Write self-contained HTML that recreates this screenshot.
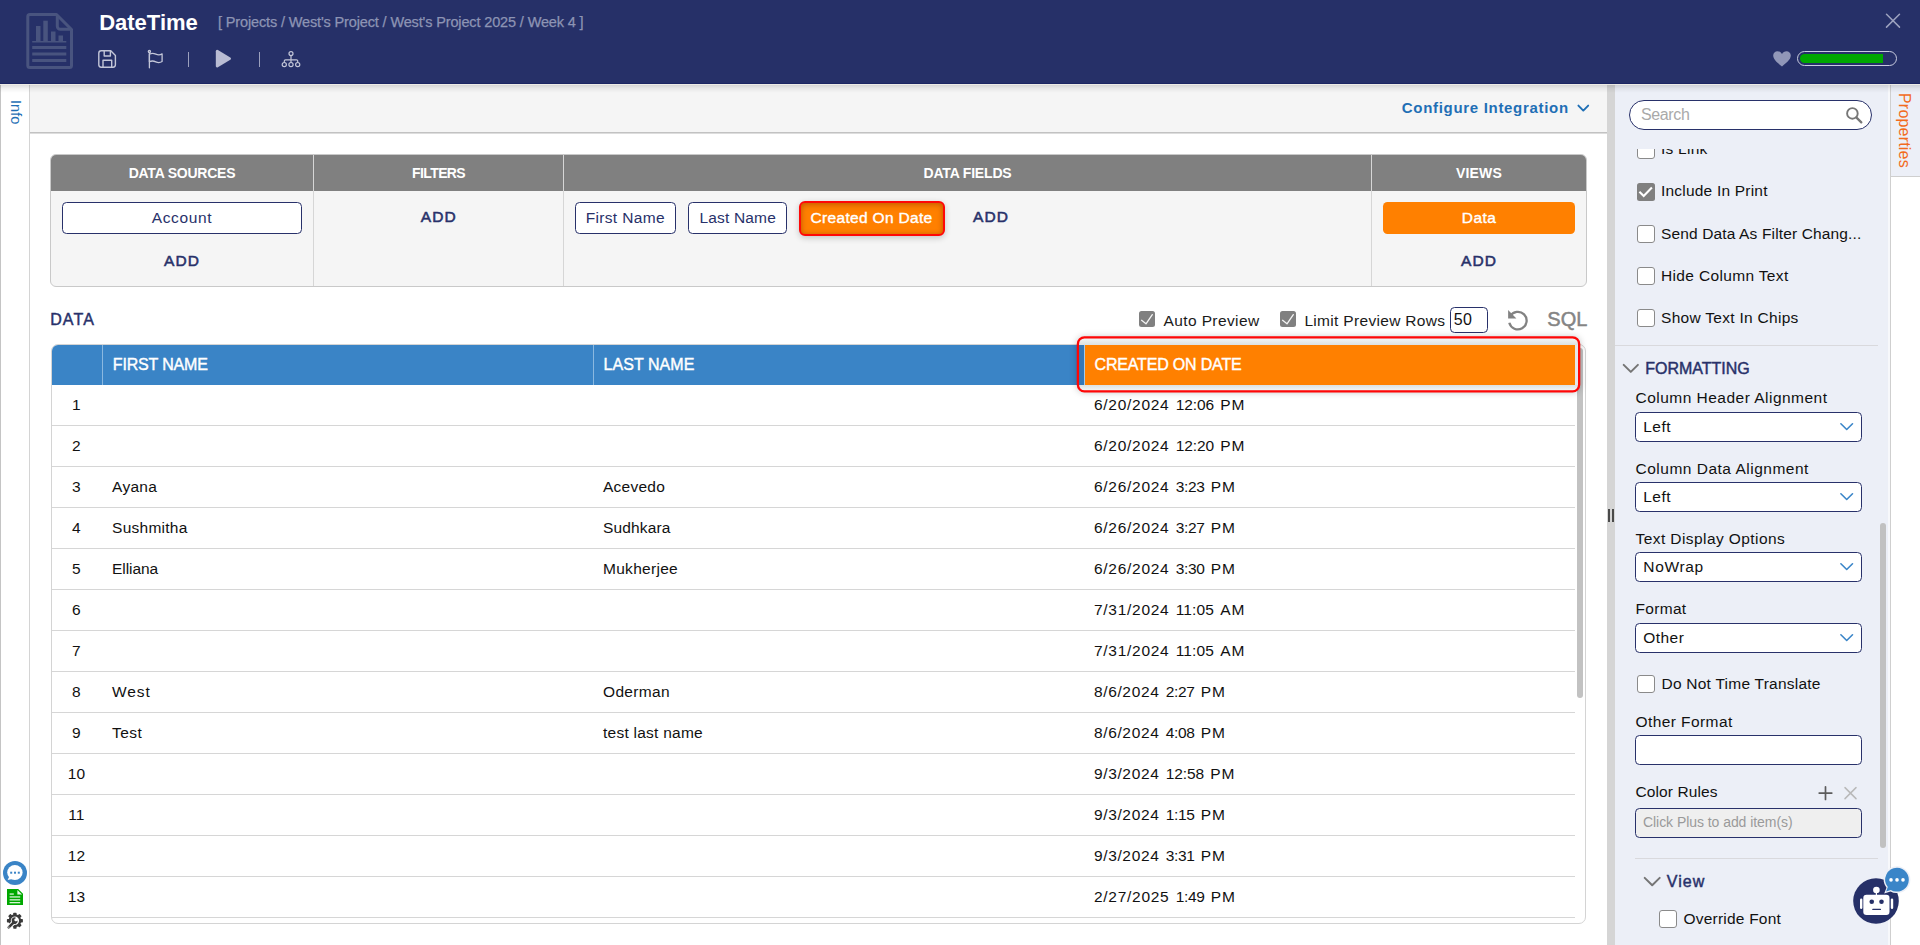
<!DOCTYPE html>
<html lang="en"><head><meta charset="utf-8"><title>DateTime</title>
<style>
html,body{margin:0;padding:0}
body{width:1920px;height:945px;overflow:hidden;background:#fff;position:relative;font-family:"Liberation Sans",sans-serif}
div,span.t,svg{position:absolute;box-sizing:border-box}
span.t{white-space:pre}
svg{overflow:visible}
</style></head>
<body>
<div style="left:30px;top:84px;width:1577px;height:861px;background:#fff"></div>
<div style="left:30px;top:84px;width:1577px;height:48px;background:#f5f5f5"></div>
<div style="left:30px;top:132px;width:1577px;height:1px;background:#c2c2c2"></div>
<div style="left:30px;top:133px;width:1577px;height:1px;background:#dddddd"></div>
<div style="left:0px;top:84px;width:30px;height:861px;background:#fff;border-left:1px solid #c4c4c4;border-right:1px solid #d4d4d4"></div>
<div style="left:1607px;top:84px;width:8px;height:861px;background:#d5d5d5"></div>
<div style="left:1615px;top:84px;width:273px;height:861px;background:#eceff7"></div>
<div style="left:1888px;top:84px;width:32px;height:861px;background:#fff"></div>
<div style="left:1888px;top:84px;width:32px;height:93px;background:#eceff7;border-bottom:1px solid #cfcfcf"></div>
<div style="left:1888px;top:84px;width:2px;height:861px;background:#f7f8fb"></div>
<div style="left:1890px;top:84px;width:1px;height:861px;background:#cfcfcf"></div>
<div style="left:0px;top:0px;width:1920px;height:84px;background:#263068;border-bottom:1px solid #1c2663;z-index:5"></div>
<div style="left:0px;top:84px;width:1920px;height:1px;background:rgba(236,234,228,.9);z-index:5"></div>
<div style="left:0px;top:85px;width:1920px;height:8px;background:linear-gradient(rgba(0,0,0,.13),rgba(0,0,0,.05) 45%,rgba(0,0,0,0));z-index:5"></div>
<div style="left:0;top:0;width:1920px;height:84px;z-index:6">
<svg style="left:24px;top:11px" width="52" height="60" viewBox="24 11 52 60" fill="none" stroke="#49547f">
<path d="M29.8 14.5h26.7l15 15v36a2 2 0 0 1-2 2h-39.7a2 2 0 0 1-2-2v-49a2 2 0 0 1 2-2z" stroke-width="3" stroke-linejoin="round"/>
<path d="M57.3 15.5v10.7a3 3 0 0 0 3 3h10.5" stroke-width="3" stroke-linejoin="round"/>
<g stroke="none" fill="#49547f"><rect x="36" y="26" width="4.5" height="15.5"/><rect x="43.3" y="20.7" width="4.5" height="20.8"/><rect x="51" y="31.5" width="4.5" height="10"/><rect x="58.5" y="35.5" width="4.5" height="6"/>
<rect x="32.2" y="41" width="34.1" height="1.5"/><rect x="32.2" y="46" width="34.1" height="3"/><rect x="32.2" y="52.5" width="34.1" height="3"/><rect x="32.2" y="59" width="34.1" height="3"/></g></svg>
<span class="t" style="left:99.20px;top:11.90px;font-size:22px;line-height:22px;color:#fff;font-weight:700;letter-spacing:-0.005px;">DateTime</span>
<span class="t" style="left:218.00px;top:14.75px;font-size:14.5px;line-height:14.5px;color:#8d94b4;letter-spacing:-0.139px;-webkit-text-stroke:0.25px #8d94b4;">[ Projects / West's Project / West's Project 2025 / Week 4 ]</span>
<svg style="left:97px;top:49px" width="20" height="20" viewBox="97 49 20 20" fill="none" stroke="#c3c6d8" stroke-width="1.4" stroke-linejoin="round">
<path d="M101.2 50.8h9.6l4.6 4.6v9.4a2.4 2.4 0 0 1-2.4 2.4h-11.8a2.4 2.4 0 0 1-2.4-2.4v-11.6a2.4 2.4 0 0 1 2.4-2.4z"/>
<path d="M104.2 50.8v5.2h6.2v-5.2"/><path d="M103 67.2v-7h8.7v7"/></svg>
<svg style="left:146px;top:49px" width="20" height="20" viewBox="146 49 20 20" fill="none" stroke="#c3c6d8" stroke-width="1.3" stroke-linejoin="round" stroke-linecap="round">
<path d="M149.4 52.6V67.8"/><circle cx="149.4" cy="51.6" r="1.1"/>
<path d="M149.4 54.2c2.5-1.4 4.3-1 6.4 0s4 1.2 6.3-.3v7.6c-2.3 1.5-4.2 1.3-6.3.3s-3.9-1.4-6.4 0z"/></svg>
<div style="left:188px;top:52px;width:1.2px;height:15px;background:#9ba0bd"></div>
<svg style="left:214px;top:48px" width="20" height="22" viewBox="214 48 20 22"><path d="M215.8 51.2a1.4 1.4 0 0 1 2.1-1.2l12.4 7.4a1.4 1.4 0 0 1 0 2.4l-12.4 7.4a1.4 1.4 0 0 1-2.1-1.2z" fill="#b9bcd3"/></svg>
<div style="left:259px;top:52px;width:1.2px;height:15px;background:#9ba0bd"></div>
<svg style="left:281px;top:50px" width="20" height="19" viewBox="281 50 20 19" fill="none" stroke="#c3c6d8" stroke-width="1.2">
<circle cx="291" cy="53.6" r="2"/><circle cx="284.3" cy="64.6" r="2.1"/><circle cx="291" cy="64.6" r="2.1"/><circle cx="297.7" cy="64.6" r="2.1"/>
<path d="M291 55.6v6.9M284.3 62.5v-1.5a1.2 1.2 0 0 1 1.2-1.2h11a1.2 1.2 0 0 1 1.2 1.2v1.5"/></svg>
<svg style="left:1884px;top:12px" width="18" height="18" viewBox="1884 12 18 18" stroke="#9da2bf" stroke-width="1.5" stroke-linecap="round"><path d="M1886.5 14.3l13 12.8M1899.5 14.3l-13 12.8"/></svg>
<svg style="left:1772px;top:50px" width="20" height="18" viewBox="0 0 20 18"><path d="M10 16.4C6.5 13.6 1.2 10 1.2 5.6 1.2 2.9 3.2 1.2 5.5 1.2c1.9 0 3.5 1 4.5 2.8 1-1.8 2.6-2.8 4.5-2.8 2.3 0 4.300 1.700 4.300 4.400 0 4.400-5.300 8-8.800 10.800z" fill="#9197b8"/></svg>
<div style="left:1796.5px;top:51px;width:100.5px;height:15px;border:1.4px solid #c9cce0;border-radius:8px"></div>
<div style="left:1800px;top:54px;width:83px;height:9px;background:#00a800;border-radius:4.5px 0 0 4.5px"></div>
</div>
<span class="t" style="left:1401.80px;top:99.80px;font-size:15px;line-height:15px;color:#1f6fb5;font-weight:700;letter-spacing:0.690px;">Configure Integration</span>
<svg style="left:1576px;top:103px" width="14" height="10" viewBox="1576 103 14 10" fill="none" stroke="#1f6fb5" stroke-width="1.9" stroke-linecap="round" stroke-linejoin="round"><path d="M1578.4 105.6l4.9 5 4.9-5"/></svg>
<div style="left:16px;top:100px;width:0;height:0"><span class="t" style="left:0;top:-7px;font-size:14.500px;line-height:14px;color:#1f6fb5;transform-origin:0 50%;transform:rotate(90deg);letter-spacing:.05px">Info</span></div>
<svg style="left:2px;top:860px" width="26" height="26" viewBox="2 860 26 26"><circle cx="15" cy="872.900" r="12" fill="#3a84c6"/>
<ellipse cx="14.900" cy="872.500" rx="7.700" ry="7.600" fill="#fff"/><path d="M9.300 876.500l-1.700 3.600 4.700-1.100z" fill="#fff"/>
<g fill="#3a84c6"><rect x="10.200" y="871.700" width="2" height="2"/><rect x="14" y="871.700" width="2" height="2"/><rect x="17.800" y="871.700" width="2" height="2"/></g></svg>
<svg style="left:7px;top:889px" width="16" height="16" viewBox="0 0 16 16"><path d="M0 0h11.200l4.800 4.800v11.200h-16z" fill="#00a800"/><path d="M10.400 .9v4.600h4.600z" fill="#e9f7e9"/>
<g fill="#d9f3d9"><rect x="2.600" y="4.400" width="4.200" height="1.300"/><rect x="2.600" y="7.300" width="10.600" height="1.300"/><rect x="2.600" y="10.200" width="10.600" height="1.300"/><rect x="2.600" y="13" width="10.600" height="1.300"/></g></svg>
<svg style="left:7px;top:913px" width="16" height="16" viewBox="0 0 16 16"><g transform="translate(7.900 7.700)"><g fill="#3a3a3a"><rect x="-1.700" y="-8" width="3.400" height="3" rx=".7" transform="rotate(0)"/><rect x="-1.700" y="-8" width="3.400" height="3" rx=".7" transform="rotate(45)"/><rect x="-1.700" y="-8" width="3.400" height="3" rx=".7" transform="rotate(90)"/><rect x="-1.700" y="-8" width="3.400" height="3" rx=".7" transform="rotate(135)"/><rect x="-1.700" y="-8" width="3.400" height="3" rx=".7" transform="rotate(180)"/><rect x="-1.700" y="-8" width="3.400" height="3" rx=".7" transform="rotate(270)"/><rect x="-1.700" y="-8" width="3.400" height="3" rx=".7" transform="rotate(315)"/></g>
<circle r="5.250" fill="none" stroke="#3a3a3a" stroke-width="2.200" /></g>
<path d="M.5 15.500l7-6.900" stroke="#fff" stroke-width="4.600" stroke-linecap="butt"/><path d="M1.700 14.300l5.400-5.300" stroke="#3a3a3a" stroke-width="2.500" stroke-linecap="round"/>
<path d="M6 10.400a2.900 2.900 0 0 0 4.600-2.900l-1.700 1.100-1.500-.9 0-1.800 1.700-1a2.900 2.900 0 0 0-4.300 3.500z" fill="#3a3a3a"/><circle cx="1.900" cy="14.100" r=".65" fill="#fff"/></svg>
<div style="left:50px;top:154px;width:1537px;height:133px;background:#f5f5f5;border:1px solid #c9c9c9;border-radius:6px;overflow:hidden"><div style="left:0;top:0;width:1537px;height:36px;background:#808080"></div><div style="left:262px;top:0;width:1px;height:132px;background:#d6d6d6"></div><div style="left:512px;top:0;width:1px;height:132px;background:#d6d6d6"></div><div style="left:1320px;top:0;width:1px;height:132px;background:#d6d6d6"></div></div>
<span class="t" style="left:128.65px;top:166.00px;font-size:14px;line-height:14px;color:#fff;font-weight:700;letter-spacing:-0.227px;">DATA SOURCES</span>
<span class="t" style="left:412.10px;top:166.00px;font-size:14px;line-height:14px;color:#fff;font-weight:700;letter-spacing:-0.614px;">FILTERS</span>
<span class="t" style="left:923.50px;top:166.00px;font-size:14px;line-height:14px;color:#fff;font-weight:700;letter-spacing:-0.179px;">DATA FIELDS</span>
<span class="t" style="left:1456.00px;top:166.00px;font-size:14px;line-height:14px;color:#fff;font-weight:700;letter-spacing:0.175px;">VIEWS</span>
<div style="left:62px;top:202px;width:240px;height:32px;background:#fff;border:1.300px solid #28316a;border-radius:4.500px"></div>
<span class="t" style="left:151.70px;top:209.75px;font-size:15.5px;line-height:15.5px;color:#28316a;letter-spacing:0.655px;">Account</span>
<span class="t" style="left:164.10px;top:252.75px;font-size:15.5px;line-height:15.5px;color:#28316a;letter-spacing:1.089px;-webkit-text-stroke:0.55px #28316a;">ADD</span>
<span class="t" style="left:420.80px;top:208.75px;font-size:15.5px;line-height:15.5px;color:#28316a;letter-spacing:1.089px;-webkit-text-stroke:0.55px #28316a;">ADD</span>
<div style="left:575px;top:202px;width:101px;height:32px;background:#fff;border:1.300px solid #28316a;border-radius:4.500px"></div>
<span class="t" style="left:585.70px;top:209.75px;font-size:15.5px;line-height:15.5px;color:#28316a;letter-spacing:0.340px;">First Name</span>
<div style="left:688px;top:202px;width:99px;height:32px;background:#fff;border:1.300px solid #28316a;border-radius:4.500px"></div>
<span class="t" style="left:699.40px;top:209.75px;font-size:15.5px;line-height:15.5px;color:#28316a;letter-spacing:0.183px;">Last Name</span>
<div style="left:799px;top:201px;width:146px;height:34.5px;background:#ff8000;border:2.200px solid #ff0808;border-radius:6px;box-shadow:0 2px 6px rgba(0,0,0,.2),inset 0 2px 6px rgba(140,60,0,.38),inset 0 0 4px rgba(140,60,0,.3)"></div>
<span class="t" style="left:810.50px;top:209.75px;font-size:15.5px;line-height:15.5px;color:#fff;letter-spacing:0.321px;-webkit-text-stroke:0.4px #fff;">Created On Date</span>
<span class="t" style="left:973.00px;top:208.75px;font-size:15.5px;line-height:15.5px;color:#28316a;letter-spacing:1.089px;-webkit-text-stroke:0.55px #28316a;">ADD</span>
<div style="left:1383px;top:202px;width:192px;height:32px;background:#ff8000;border-radius:4.500px"></div>
<span class="t" style="left:1461.80px;top:209.75px;font-size:15.5px;line-height:15.5px;color:#fff;letter-spacing:0.463px;-webkit-text-stroke:0.4px #fff;">Data</span>
<span class="t" style="left:1461.00px;top:252.75px;font-size:15.5px;line-height:15.5px;color:#28316a;letter-spacing:1.089px;-webkit-text-stroke:0.55px #28316a;">ADD</span>
<span class="t" style="left:50.20px;top:311.90px;font-size:16px;line-height:16px;color:#28316a;letter-spacing:1.126px;-webkit-text-stroke:0.45px #28316a;">DATA</span>
<div style="left:1139px;top:311px;width:16px;height:16px;background:#808080;border-radius:2.500px"></div>
<svg style="left:1139px;top:311px" width="16" height="16" viewBox="0 0 16 16" fill="none" stroke="#f4f4f4" stroke-width="1.300" stroke-linecap="round" stroke-linejoin="round"><path d="M2.600 9.300l4.400 3.500 6.300-9.200"/></svg>
<span class="t" style="left:1163.50px;top:312.75px;font-size:15.5px;line-height:15.5px;color:#1a1a1a;letter-spacing:0.389px;">Auto Preview</span>
<div style="left:1280px;top:311px;width:16px;height:16px;background:#808080;border-radius:2.500px"></div>
<svg style="left:1280px;top:311px" width="16" height="16" viewBox="0 0 16 16" fill="none" stroke="#f4f4f4" stroke-width="1.300" stroke-linecap="round" stroke-linejoin="round"><path d="M2.600 9.300l4.400 3.500 6.300-9.200"/></svg>
<span class="t" style="left:1304.40px;top:312.75px;font-size:15.5px;line-height:15.5px;color:#1a1a1a;letter-spacing:0.320px;">Limit Preview Rows</span>
<div style="left:1450px;top:307px;width:38px;height:26px;background:#fff;border:1.300px solid #28316a;border-radius:4.500px"></div>
<span class="t" style="left:1453.80px;top:311.70px;font-size:16px;line-height:16px;color:#111;letter-spacing:0.402px;">50</span>
<svg style="left:1506px;top:308px" width="24" height="24" viewBox="1506 308 24 24" fill="none" stroke="#828282" stroke-width="2.300"><path d="M1510.200 316.200a8.800 8.800 0 1 1 -.9 6.600" stroke-linecap="butt"/><path d="M1508.100 310.100v8.500h8.300z" fill="#828282" stroke="none"/></svg>
<span class="t" style="left:1547.30px;top:309.00px;font-size:20px;line-height:20px;color:#858585;letter-spacing:0.090px;-webkit-text-stroke:0.5px #858585;">SQL</span>
<div style="left:51px;top:344px;width:1534.5px;height:579.5px;border:1.300px solid #d4d4d4;border-radius:7px;background:#fff"></div>
<div style="left:52px;top:345px;width:1033px;height:40px;background:#3a84c6;border-radius:6px 0 0 0"></div>
<div style="left:102px;top:345px;width:1px;height:40px;background:#8ab8e0"></div>
<div style="left:593px;top:345px;width:1px;height:40px;background:#8ab8e0"></div>
<span class="t" style="left:112.80px;top:356.50px;font-size:16px;line-height:16px;color:#fff;letter-spacing:-0.161px;-webkit-text-stroke:0.4px #fff;">FIRST NAME</span>
<span class="t" style="left:603.50px;top:356.50px;font-size:16px;line-height:16px;color:#fff;letter-spacing:0.066px;-webkit-text-stroke:0.4px #fff;">LAST NAME</span>
<div style="left:52px;top:425px;width:1523px;height:1px;background:#d6d6d6"></div>
<span class="t" style="left:72.09px;top:396.75px;font-size:15.5px;line-height:15.5px;color:#111;">1</span>
<span class="t" style="left:1093.90px;top:396.75px;font-size:15.5px;line-height:15.5px;color:#111;letter-spacing:0.737px;">6/20/2024</span>
<span class="t" style="left:1175.70px;top:396.75px;font-size:15.5px;line-height:15.5px;color:#111;letter-spacing:-0.099px;">12:06</span>
<span class="t" style="left:1220.30px;top:396.75px;font-size:15.5px;line-height:15.5px;color:#111;letter-spacing:0.875px;">PM</span>
<div style="left:52px;top:466px;width:1523px;height:1px;background:#d6d6d6"></div>
<span class="t" style="left:72.09px;top:437.75px;font-size:15.5px;line-height:15.5px;color:#111;">2</span>
<span class="t" style="left:1093.90px;top:437.75px;font-size:15.5px;line-height:15.5px;color:#111;letter-spacing:0.737px;">6/20/2024</span>
<span class="t" style="left:1175.70px;top:437.75px;font-size:15.5px;line-height:15.5px;color:#111;letter-spacing:-0.099px;">12:20</span>
<span class="t" style="left:1220.30px;top:437.75px;font-size:15.5px;line-height:15.5px;color:#111;letter-spacing:0.875px;">PM</span>
<div style="left:52px;top:507px;width:1523px;height:1px;background:#d6d6d6"></div>
<span class="t" style="left:72.09px;top:478.75px;font-size:15.5px;line-height:15.5px;color:#111;">3</span>
<span class="t" style="left:112.10px;top:478.75px;font-size:15.5px;line-height:15.5px;color:#111;letter-spacing:0.266px;">Ayana</span>
<span class="t" style="left:603.00px;top:478.75px;font-size:15.5px;line-height:15.5px;color:#111;letter-spacing:0.239px;">Acevedo</span>
<span class="t" style="left:1093.90px;top:478.75px;font-size:15.5px;line-height:15.5px;color:#111;letter-spacing:0.737px;">6/26/2024</span>
<span class="t" style="left:1175.70px;top:478.75px;font-size:15.5px;line-height:15.5px;color:#111;letter-spacing:-0.343px;">3:23</span>
<span class="t" style="left:1210.80px;top:478.75px;font-size:15.5px;line-height:15.5px;color:#111;letter-spacing:0.875px;">PM</span>
<div style="left:52px;top:548px;width:1523px;height:1px;background:#d6d6d6"></div>
<span class="t" style="left:72.09px;top:519.75px;font-size:15.5px;line-height:15.5px;color:#111;">4</span>
<span class="t" style="left:112.10px;top:519.75px;font-size:15.5px;line-height:15.5px;color:#111;letter-spacing:0.252px;">Sushmitha</span>
<span class="t" style="left:603.00px;top:519.75px;font-size:15.5px;line-height:15.5px;color:#111;letter-spacing:0.143px;">Sudhkara</span>
<span class="t" style="left:1093.90px;top:519.75px;font-size:15.5px;line-height:15.5px;color:#111;letter-spacing:0.737px;">6/26/2024</span>
<span class="t" style="left:1175.70px;top:519.75px;font-size:15.5px;line-height:15.5px;color:#111;letter-spacing:-0.343px;">3:27</span>
<span class="t" style="left:1210.80px;top:519.75px;font-size:15.5px;line-height:15.5px;color:#111;letter-spacing:0.875px;">PM</span>
<div style="left:52px;top:589px;width:1523px;height:1px;background:#d6d6d6"></div>
<span class="t" style="left:72.09px;top:560.75px;font-size:15.5px;line-height:15.5px;color:#111;">5</span>
<span class="t" style="left:112.10px;top:560.75px;font-size:15.5px;line-height:15.5px;color:#111;letter-spacing:-0.076px;">Elliana</span>
<span class="t" style="left:603.00px;top:560.75px;font-size:15.5px;line-height:15.5px;color:#111;letter-spacing:0.292px;">Mukherjee</span>
<span class="t" style="left:1093.90px;top:560.75px;font-size:15.5px;line-height:15.5px;color:#111;letter-spacing:0.737px;">6/26/2024</span>
<span class="t" style="left:1175.70px;top:560.75px;font-size:15.5px;line-height:15.5px;color:#111;letter-spacing:-0.343px;">3:30</span>
<span class="t" style="left:1210.80px;top:560.75px;font-size:15.5px;line-height:15.5px;color:#111;letter-spacing:0.875px;">PM</span>
<div style="left:52px;top:630px;width:1523px;height:1px;background:#d6d6d6"></div>
<span class="t" style="left:72.09px;top:601.75px;font-size:15.5px;line-height:15.5px;color:#111;">6</span>
<span class="t" style="left:1093.90px;top:601.75px;font-size:15.5px;line-height:15.5px;color:#111;letter-spacing:0.737px;">7/31/2024</span>
<span class="t" style="left:1175.70px;top:601.75px;font-size:15.5px;line-height:15.5px;color:#111;letter-spacing:0.132px;">11:05</span>
<span class="t" style="left:1220.30px;top:601.75px;font-size:15.5px;line-height:15.5px;color:#111;letter-spacing:0.875px;">AM</span>
<div style="left:52px;top:671px;width:1523px;height:1px;background:#d6d6d6"></div>
<span class="t" style="left:72.09px;top:642.75px;font-size:15.5px;line-height:15.5px;color:#111;">7</span>
<span class="t" style="left:1093.90px;top:642.75px;font-size:15.5px;line-height:15.5px;color:#111;letter-spacing:0.737px;">7/31/2024</span>
<span class="t" style="left:1175.70px;top:642.75px;font-size:15.5px;line-height:15.5px;color:#111;letter-spacing:0.132px;">11:05</span>
<span class="t" style="left:1220.30px;top:642.75px;font-size:15.5px;line-height:15.5px;color:#111;letter-spacing:0.875px;">AM</span>
<div style="left:52px;top:712px;width:1523px;height:1px;background:#d6d6d6"></div>
<span class="t" style="left:72.09px;top:683.75px;font-size:15.5px;line-height:15.5px;color:#111;">8</span>
<span class="t" style="left:112.10px;top:683.75px;font-size:15.5px;line-height:15.5px;color:#111;letter-spacing:0.867px;">West</span>
<span class="t" style="left:603.00px;top:683.75px;font-size:15.5px;line-height:15.5px;color:#111;letter-spacing:0.339px;">Oderman</span>
<span class="t" style="left:1093.90px;top:683.75px;font-size:15.5px;line-height:15.5px;color:#111;letter-spacing:0.657px;">8/6/2024</span>
<span class="t" style="left:1165.70px;top:683.75px;font-size:15.5px;line-height:15.5px;color:#111;letter-spacing:-0.343px;">2:27</span>
<span class="t" style="left:1200.80px;top:683.75px;font-size:15.5px;line-height:15.5px;color:#111;letter-spacing:0.875px;">PM</span>
<div style="left:52px;top:753px;width:1523px;height:1px;background:#d6d6d6"></div>
<span class="t" style="left:72.09px;top:724.75px;font-size:15.5px;line-height:15.5px;color:#111;">9</span>
<span class="t" style="left:112.10px;top:724.75px;font-size:15.5px;line-height:15.5px;color:#111;letter-spacing:0.441px;">Test</span>
<span class="t" style="left:603.00px;top:724.75px;font-size:15.5px;line-height:15.5px;color:#111;letter-spacing:0.250px;">test last name</span>
<span class="t" style="left:1093.90px;top:724.75px;font-size:15.5px;line-height:15.5px;color:#111;letter-spacing:0.657px;">8/6/2024</span>
<span class="t" style="left:1165.70px;top:724.75px;font-size:15.5px;line-height:15.5px;color:#111;letter-spacing:-0.343px;">4:08</span>
<span class="t" style="left:1200.80px;top:724.75px;font-size:15.5px;line-height:15.5px;color:#111;letter-spacing:0.875px;">PM</span>
<div style="left:52px;top:794px;width:1523px;height:1px;background:#d6d6d6"></div>
<span class="t" style="left:67.78px;top:765.75px;font-size:15.5px;line-height:15.5px;color:#111;">10</span>
<span class="t" style="left:1093.90px;top:765.75px;font-size:15.5px;line-height:15.5px;color:#111;letter-spacing:0.657px;">9/3/2024</span>
<span class="t" style="left:1165.70px;top:765.75px;font-size:15.5px;line-height:15.5px;color:#111;letter-spacing:-0.099px;">12:58</span>
<span class="t" style="left:1210.30px;top:765.75px;font-size:15.5px;line-height:15.5px;color:#111;letter-spacing:0.875px;">PM</span>
<div style="left:52px;top:835px;width:1523px;height:1px;background:#d6d6d6"></div>
<span class="t" style="left:68.35px;top:806.75px;font-size:15.5px;line-height:15.5px;color:#111;">11</span>
<span class="t" style="left:1093.90px;top:806.75px;font-size:15.5px;line-height:15.5px;color:#111;letter-spacing:0.657px;">9/3/2024</span>
<span class="t" style="left:1165.70px;top:806.75px;font-size:15.5px;line-height:15.5px;color:#111;letter-spacing:-0.343px;">1:15</span>
<span class="t" style="left:1200.80px;top:806.75px;font-size:15.5px;line-height:15.5px;color:#111;letter-spacing:0.875px;">PM</span>
<div style="left:52px;top:876px;width:1523px;height:1px;background:#d6d6d6"></div>
<span class="t" style="left:67.78px;top:847.75px;font-size:15.5px;line-height:15.5px;color:#111;">12</span>
<span class="t" style="left:1093.90px;top:847.75px;font-size:15.5px;line-height:15.5px;color:#111;letter-spacing:0.657px;">9/3/2024</span>
<span class="t" style="left:1165.70px;top:847.75px;font-size:15.5px;line-height:15.5px;color:#111;letter-spacing:-0.343px;">3:31</span>
<span class="t" style="left:1200.80px;top:847.75px;font-size:15.5px;line-height:15.5px;color:#111;letter-spacing:0.875px;">PM</span>
<div style="left:52px;top:917px;width:1523px;height:1px;background:#d6d6d6"></div>
<span class="t" style="left:67.78px;top:888.75px;font-size:15.5px;line-height:15.5px;color:#111;">13</span>
<span class="t" style="left:1093.90px;top:888.75px;font-size:15.5px;line-height:15.5px;color:#111;letter-spacing:0.737px;">2/27/2025</span>
<span class="t" style="left:1175.70px;top:888.75px;font-size:15.5px;line-height:15.5px;color:#111;letter-spacing:-0.343px;">1:49</span>
<span class="t" style="left:1210.80px;top:888.75px;font-size:15.5px;line-height:15.5px;color:#111;letter-spacing:0.875px;">PM</span>
<div style="left:1577px;top:348px;width:6px;height:350px;background:#c2c2c2;border-radius:3px"></div>
<div style="left:1078px;top:338px;width:501px;height:53px;border-radius:6px;background:#e9eded;box-shadow:0 0 7px 1px rgba(0,0,0,.25)"></div>
<div style="left:1079px;top:339px;width:499px;height:6px;background:linear-gradient(#f0f3f3,#dde1e1)"></div>
<div style="left:1079px;top:385px;width:499px;height:5px;background:linear-gradient(#dde1e1,#f0f3f3)"></div>
<div style="left:1079px;top:345px;width:5px;height:40px;background:#3577b6"></div>
<div style="left:1084px;top:345px;width:1px;height:40px;background:#a5c9e8"></div>
<div style="left:1085px;top:345px;width:490px;height:40px;background:#ff8000"></div>
<div style="left:1575px;top:345px;width:3px;height:40px;background:#e4e8e8"></div>
<svg style="left:1070px;top:330px" width="520" height="70" viewBox="1070 330 520 70" fill="none"><rect x="1077.900" y="337.400" width="501.250" height="53.950" rx="6.500" stroke="#ff0606" stroke-width="2.300"/></svg>
<span class="t" style="left:1094.50px;top:356.50px;font-size:16px;line-height:16px;color:#fff;letter-spacing:-0.176px;-webkit-text-stroke:0.4px #fff;">CREATED ON DATE</span>
<div style="left:1629px;top:100px;width:243px;height:30px;background:#fff;border:1.400px solid #28316a;border-radius:15px"></div>
<span class="t" style="left:1641.00px;top:107.00px;font-size:16px;line-height:16px;color:#a9a9a9;letter-spacing:-0.384px;">Search</span>
<svg style="left:1845px;top:106px" width="18" height="18" viewBox="1845 106 18 18" fill="none" stroke="#777" stroke-width="1.900" stroke-linecap="round"><circle cx="1852.400" cy="113.400" r="5.300"/><path d="M1856.500 117.600l4.800 4.800" stroke-width="2.300"/></svg>
<div style="left:1615px;top:149px;width:273px;height:796px;overflow:hidden"><div style="left:-1615px;top:-149px;width:1920px;height:945px">
<div style="left:1637px;top:141px;width:18px;height:18px;background:#fff;border:1.300px solid #8a8a8a;border-radius:3px"></div>
<span class="t" style="left:1661.00px;top:140.75px;font-size:15.5px;line-height:15.5px;color:#111;letter-spacing:0.241px;">Is Link</span>
<div style="left:1637px;top:183px;width:18px;height:18px;background:#808080;border-radius:2.500px"></div>
<svg style="left:1637px;top:183px" width="18" height="18" viewBox="0 0 18 18" fill="none" stroke="#fff" stroke-width="2.100" stroke-linecap="butt" stroke-linejoin="miter"><path d="M2.400 8.700l4.300 4.300 8.200-8.400"/></svg>
<span class="t" style="left:1661.00px;top:182.75px;font-size:15.5px;line-height:15.5px;color:#111;letter-spacing:0.206px;">Include In Print</span>
<div style="left:1637px;top:225px;width:18px;height:18px;background:#fff;border:1.300px solid #8a8a8a;border-radius:3px"></div>
<span class="t" style="left:1661.00px;top:225.75px;font-size:15.5px;line-height:15.5px;color:#111;letter-spacing:0.142px;">Send Data As Filter Chang...</span>
<div style="left:1637px;top:267px;width:18px;height:18px;background:#fff;border:1.300px solid #8a8a8a;border-radius:3px"></div>
<span class="t" style="left:1661.00px;top:267.75px;font-size:15.5px;line-height:15.5px;color:#111;letter-spacing:0.346px;">Hide Column Text</span>
<div style="left:1637px;top:309px;width:18px;height:18px;background:#fff;border:1.300px solid #8a8a8a;border-radius:3px"></div>
<span class="t" style="left:1661.00px;top:309.75px;font-size:15.5px;line-height:15.5px;color:#111;letter-spacing:0.289px;">Show Text In Chips</span>
<div style="left:1615px;top:345px;width:263px;height:1px;background:#d9d9dd"></div>
<svg style="left:1622px;top:363px" width="18" height="12" viewBox="0 0 18 12" fill="none" stroke="#757575" stroke-width="2" stroke-linecap="round" stroke-linejoin="round"><path d="M1.700 1.900l7.100 7 7.100-7"/></svg>
<span class="t" style="left:1645.30px;top:360.50px;font-size:16px;line-height:16px;color:#28316a;letter-spacing:-0.028px;-webkit-text-stroke:0.45px #28316a;">FORMATTING</span>
<span class="t" style="left:1635.50px;top:390.35px;font-size:15.5px;line-height:15.5px;color:#111;letter-spacing:0.481px;">Column Header Alignment</span>
<div style="left:1635px;top:412px;width:227px;height:30px;background:#fff;border:1.400px solid #28316a;border-radius:4.500px"></div>
<span class="t" style="left:1643.30px;top:419.35px;font-size:15.5px;line-height:15.5px;color:#111;letter-spacing:0.435px;">Left</span>
<svg style="left:1839px;top:422px" width="16" height="10" viewBox="0 0 16 10" fill="none" stroke="#3a85c8" stroke-width="1.600" stroke-linecap="round" stroke-linejoin="round"><path d="M1.900 1.800l5.800 5.700 5.800-5.700"/></svg>
<span class="t" style="left:1635.50px;top:461.35px;font-size:15.5px;line-height:15.5px;color:#111;letter-spacing:0.503px;">Column Data Alignment</span>
<div style="left:1635px;top:482px;width:227px;height:30px;background:#fff;border:1.400px solid #28316a;border-radius:4.500px"></div>
<span class="t" style="left:1643.30px;top:489.35px;font-size:15.5px;line-height:15.5px;color:#111;letter-spacing:0.435px;">Left</span>
<svg style="left:1839px;top:492px" width="16" height="10" viewBox="0 0 16 10" fill="none" stroke="#3a85c8" stroke-width="1.600" stroke-linecap="round" stroke-linejoin="round"><path d="M1.900 1.800l5.800 5.700 5.800-5.700"/></svg>
<span class="t" style="left:1635.50px;top:531.35px;font-size:15.5px;line-height:15.5px;color:#111;letter-spacing:0.421px;">Text Display Options</span>
<div style="left:1635px;top:552px;width:227px;height:30px;background:#fff;border:1.400px solid #28316a;border-radius:4.500px"></div>
<span class="t" style="left:1643.30px;top:559.35px;font-size:15.5px;line-height:15.5px;color:#111;letter-spacing:0.654px;">NoWrap</span>
<svg style="left:1839px;top:562px" width="16" height="10" viewBox="0 0 16 10" fill="none" stroke="#3a85c8" stroke-width="1.600" stroke-linecap="round" stroke-linejoin="round"><path d="M1.900 1.800l5.800 5.700 5.800-5.700"/></svg>
<span class="t" style="left:1635.50px;top:601.35px;font-size:15.5px;line-height:15.5px;color:#111;letter-spacing:0.318px;">Format</span>
<div style="left:1635px;top:623px;width:227px;height:30px;background:#fff;border:1.400px solid #28316a;border-radius:4.500px"></div>
<span class="t" style="left:1643.30px;top:630.35px;font-size:15.5px;line-height:15.5px;color:#111;letter-spacing:0.447px;">Other</span>
<svg style="left:1839px;top:633px" width="16" height="10" viewBox="0 0 16 10" fill="none" stroke="#3a85c8" stroke-width="1.600" stroke-linecap="round" stroke-linejoin="round"><path d="M1.900 1.800l5.800 5.700 5.800-5.700"/></svg>
<div style="left:1637px;top:675px;width:18px;height:18px;background:#fff;border:1.300px solid #8a8a8a;border-radius:3px"></div>
<span class="t" style="left:1661.50px;top:676.35px;font-size:15.5px;line-height:15.5px;color:#111;letter-spacing:0.238px;">Do Not Time Translate</span>
<span class="t" style="left:1635.50px;top:714.05px;font-size:15.5px;line-height:15.5px;color:#111;letter-spacing:0.419px;">Other Format</span>
<div style="left:1635px;top:735px;width:227px;height:30px;background:#fff;border:1.400px solid #28316a;border-radius:4.500px"></div>
<span class="t" style="left:1635.50px;top:784.15px;font-size:15.5px;line-height:15.5px;color:#111;letter-spacing:0.111px;">Color Rules</span>
<svg style="left:1817px;top:785px" width="42" height="16" viewBox="1817 785 42 16" fill="none" stroke-width="1.500" stroke-linecap="round"><path d="M1825.500 786.800v12.600M1819.200 793.100h12.600" stroke="#5c5c5c" stroke-width="1.700"/><path d="M1845 787.600l11 11M1856 787.600l-11 11" stroke="#b9b9b9"/></svg>
<div style="left:1635px;top:808px;width:227px;height:30px;background:#efefef;border:1.400px solid #28316a;border-radius:4.500px"></div>
<span class="t" style="left:1643.00px;top:814.60px;font-size:14px;line-height:14px;color:#9a9a9a;letter-spacing:-0.054px;">Click Plus to add item(s)</span>
<div style="left:1635px;top:858px;width:243px;height:1px;background:#d9d9dd"></div>
<svg style="left:1643px;top:876px" width="19" height="12" viewBox="0 0 19 12" fill="none" stroke="#757575" stroke-width="2" stroke-linecap="round" stroke-linejoin="round"><path d="M1.700 1.900l7.500 7.300 7.500-7.300"/></svg>
<span class="t" style="left:1666.80px;top:873.80px;font-size:16px;line-height:16px;color:#28316a;letter-spacing:1.002px;-webkit-text-stroke:0.45px #28316a;">View</span>
<div style="left:1659px;top:910px;width:18px;height:18px;background:#fff;border:1.300px solid #8a8a8a;border-radius:3px"></div>
<span class="t" style="left:1683.40px;top:911.35px;font-size:15.5px;line-height:15.5px;color:#111;letter-spacing:0.226px;">Override Font</span>
</div></div>
<div style="left:1880px;top:523px;width:6px;height:325px;background:#c1c1c1;border-radius:3px"></div>
<div style="left:1608.3px;top:509px;width:1.5px;height:13px;background:#4a4a4a"></div>
<div style="left:1612px;top:509px;width:1.5px;height:13px;background:#4a4a4a"></div>
<div style="left:1904px;top:92.500px;width:0;height:0"><span class="t" style="left:0;top:-8px;font-size:16px;line-height:16px;color:#f26b1d;transform-origin:0 50%;transform:rotate(90deg);letter-spacing:.2px">Properties</span></div>
<svg style="left:1850px;top:864px" width="62" height="62" viewBox="1850 864 62 62">
<circle cx="1876" cy="901" r="22.800" fill="#263068"/>
<path d="M1897 866.300a13.400 13.400 0 1 1 -6.500 25.100l-6.300 2 2.300-5.600a13.400 13.400 0 0 1 10.500-21.500z" fill="#eceff7"/>
<path d="M1897 867.800a11.900 11.900 0 1 1 -6.200 22.100l-4.700 1.600 1.700-4.400a11.900 11.900 0 0 1 9.200-19.300z" fill="#3a85c8"/>
<g fill="#fff"><circle cx="1891" cy="879.900" r="1.800"/><circle cx="1897" cy="879.900" r="1.800"/><circle cx="1903" cy="879.900" r="1.800"/>
<rect x="1863.300" y="894.700" width="26.200" height="20.300" rx="3.200"/><rect x="1860" y="898.500" width="2.400" height="10.500" rx="1.200"/><rect x="1890.800" y="898.500" width="2.400" height="10.500" rx="1.200"/>
<circle cx="1876.400" cy="890" r="3.300"/><rect x="1875.800" y="891" width="1.200" height="4.500"/></g>
<g fill="#263068"><circle cx="1871.750" cy="901.700" r="2.300"/><circle cx="1881.500" cy="901.700" r="2.300"/><rect x="1872.200" y="908.800" width="8.800" height="1.300" rx=".6"/></g></svg>
</body></html>
